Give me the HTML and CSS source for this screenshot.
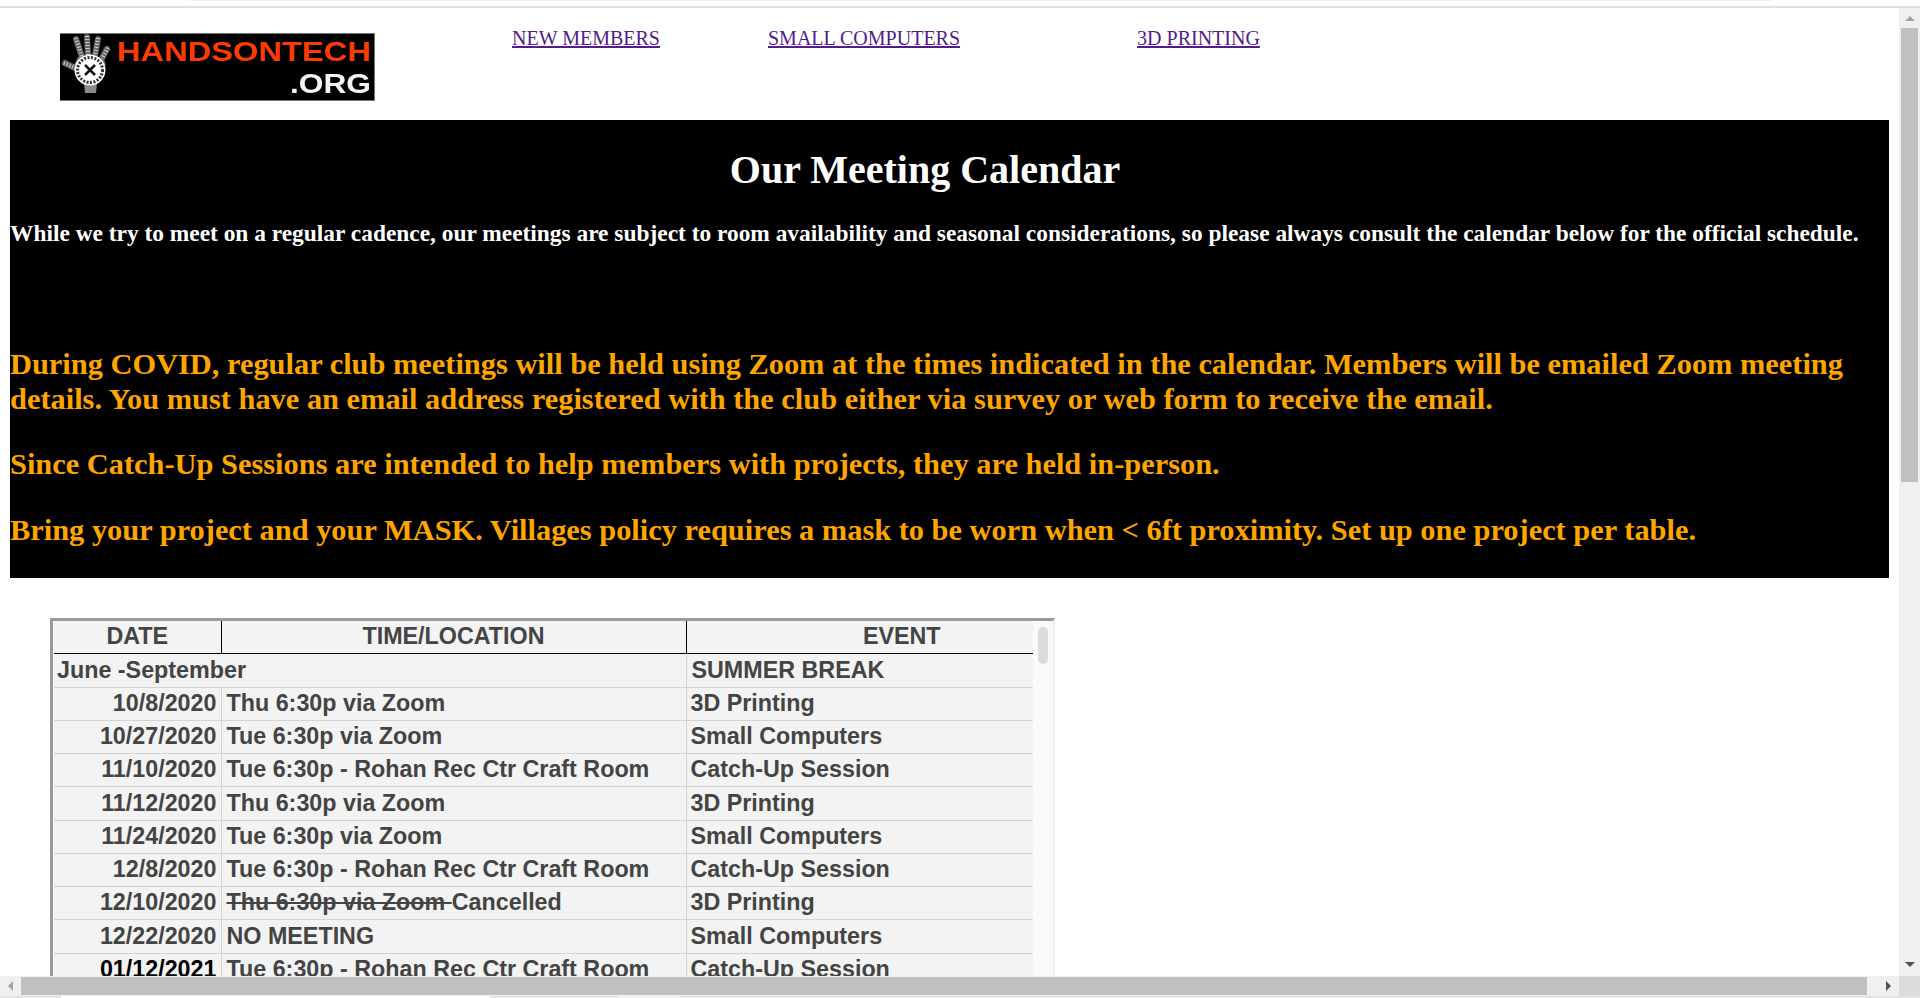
FILE: index.html
```html
<!DOCTYPE html>
<html lang="en">
<head>
<meta charset="utf-8">
<title>Our Meeting Calendar</title>
<link rel="stylesheet" href="styles.css">
</head>
<body>
<div class="shell">
  <div class="topstrip"><span class="topstrip-bar"></span></div>
  <div class="viewport">
    <main class="page">
      <header class="masthead">
        <a class="logo" href="#" aria-label="HandsOnTech.org">
          <svg width="315" height="68" viewBox="0 0 315 68">
            <rect x="0" y="0" width="315" height="68" fill="#777"/>
            <rect x="0" y="1" width="314" height="66" fill="#000"/>
            <g fill="none" stroke="#666" stroke-width="6" stroke-linecap="round">
              <path d="M16 6 22 24"/><path d="M27 4 28 22"/><path d="M38 6 35 22"/><path d="M47 16 41 27"/><path d="M5 30 17 36"/>
            </g>
            <g fill="none" stroke="#d0d0d0" stroke-width="4" stroke-dasharray="1 2">
              <path d="M16 5 22 24"/><path d="M27 3 28 22"/><path d="M38 5 35 22"/><path d="M48 15 41 27"/><path d="M4 30 17 36"/>
            </g>
            <path d="M18 24H43L46 32H14Z" fill="#777"/>
            <path d="M24 50H37L36 60H25Z" fill="#8a8a8a"/>
            <circle cx="30" cy="37" r="15.500" fill="#fff"/>
            <circle cx="30" cy="37" r="12.500" fill="none" stroke="#333" stroke-width="3" stroke-dasharray="2 1.500"/>
            <path d="M25 32 35 42M35 32 25 42" stroke="#111" stroke-width="2.500"/>
            <text class="logo-red" x="57" y="28" textLength="254" lengthAdjust="spacingAndGlyphs">HANDSONTECH</text>
            <text class="logo-white" x="230" y="60" textLength="81" lengthAdjust="spacingAndGlyphs">.ORG</text>
          </svg>
        </a>
        <nav class="nav">
          <a class="nav-a" href="#">NEW MEMBERS</a>
          <a class="nav-b" href="#">SMALL COMPUTERS</a>
          <a class="nav-c" href="#">3D PRINTING</a>
        </nav>
      </header>
      <section class="hero">
        <h1>Our Meeting Calendar</h1>
        <p class="lead">While we try to meet on a regular cadence, our meetings are subject to room availability and seasonal considerations, so please always consult the calendar below for the official schedule.</p>
        <p class="note first">During COVID, regular club meetings will be held using Zoom at the times indicated in the calendar. Members will be emailed Zoom meeting details. You must have an email address registered with the club either via survey or web form to receive the email.</p>
        <p class="note">Since Catch-Up Sessions are intended to help members with projects, they are held in-person.</p>
        <p class="note last">Bring your project and your MASK. Villages policy requires a mask to be worn when &lt; 6ft proximity. Set up one project per table.</p>
      </section>
      <div class="frame">
        <div class="sheet">
          <table class="cal">
            <thead><tr><th class="c1">DATE</th><th class="c2">TIME/LOCATION</th><th class="c3">EVENT</th></tr></thead>
            <tbody>
              <tr><td class="span" colspan="2">June -September</td><td>SUMMER BREAK</td></tr>
              <tr><td class="num">10/8/2020</td><td>Thu 6:30p via Zoom</td><td>3D Printing</td></tr>
              <tr><td class="num">10/27/2020</td><td>Tue 6:30p via Zoom</td><td>Small Computers</td></tr>
              <tr><td class="num">11/10/2020</td><td>Tue 6:30p - Rohan Rec Ctr Craft Room</td><td>Catch-Up Session</td></tr>
              <tr><td class="num">11/12/2020</td><td>Thu 6:30p via Zoom</td><td>3D Printing</td></tr>
              <tr><td class="num">11/24/2020</td><td>Tue 6:30p via Zoom</td><td>Small Computers</td></tr>
              <tr><td class="num">12/8/2020</td><td>Tue 6:30p - Rohan Rec Ctr Craft Room</td><td>Catch-Up Session</td></tr>
              <tr><td class="num">12/10/2020</td><td><s>Thu 6:30p via Zoom </s>Cancelled</td><td>3D Printing</td></tr>
              <tr><td class="num">12/22/2020</td><td>NO MEETING</td><td>Small Computers</td></tr>
              <tr><td class="num dark">01/12/2021</td><td>Tue 6:30p - Rohan Rec Ctr Craft Room</td><td>Catch-Up Session</td></tr>
            </tbody>
          </table>
          <div class="mini-track"><span class="mini-thumb"></span></div>
        </div>
      </div>
    </main>
    <div class="vbar">
      <span class="arrow up"></span>
      <span class="vthumb"></span>
      <span class="arrow down"></span>
    </div>
  </div>
  <div class="hbar">
    <span class="arrow left-a"></span>
    <span class="hthumb"></span>
    <span class="arrow right-a"></span>
    <span class="corner"></span>
  </div>
  <div class="bottomstrip"><span class="tab-a"></span><span class="tab-b"></span></div>
</div>
</body>
</html>
```
FILE: styles.css
```css
* { box-sizing: border-box; }
html, body { margin: 0; height: 100%; overflow: hidden; background: #fff; }
.shell { height: 998px; display: flex; flex-direction: column; font-family: "Liberation Serif", serif; }
.topstrip { height: 8px; flex: none; border-bottom: 2px solid #e0e0e0; }
.topstrip-bar { display: block; height: 1px; margin: 0 147px 0 190px; background: #f0f0f0; }
.viewport { flex: 1; min-height: 0; display: flex; }
.page { flex: 1; min-width: 0; overflow: hidden; padding: 0 10px; }
.masthead { height: 112px; display: flex; }
.logo { display: block; flex: none; margin: 25px 0 0 50px; width: 315px; height: 68px; }
.logo svg { display: block; filter: blur(0.3px); }
.logo-red { font: 700 27px "Liberation Sans", sans-serif; fill: #ff3a00; }
.logo-white { font: 700 27px "Liberation Sans", sans-serif; fill: #f4f4f4; }
.nav { display: flex; padding-top: 18px; font-size: 20px; line-height: 24px; margin-left: 137px; }
.nav a { color: #551a8b; }
.nav-b { margin-left: 108px; }
.nav-c { margin-left: 177px; }
.hero { width: 1879px; height: 458px; background: #000; color: #fff; overflow: hidden; }
.hero h1 { margin: 27px 0 0; padding-right: 49px; font-size: 40px; line-height: 46px; text-align: center; }
.lead { margin: 27px 0 0; font-size: 23.400px; line-height: 27px; font-weight: 700; white-space: nowrap; }
.note { margin: 30px 0 0; font-size: 30.400px; line-height: 35px; font-weight: 700; color: #ffa500; }
.note.first { margin-top: 100px; }
.note.last { margin-top: 31px; }
.frame { margin: 40px 0 0 40px; width: 1005px; height: 400px; border: 2px solid #eee; border-top: 3px solid #9a9a9a; border-left: 3px solid #9a9a9a; padding: 0 0 0 1px; background: #fff; }
.sheet { display: flex; height: 100%; }
.cal { border-collapse: collapse; table-layout: fixed; flex: none; width: 979px; height: 0; font: 700 23.300px "Liberation Sans", sans-serif; color: #444; background: #f3f3f3; }
.cal th, .cal td { padding: 0 4px; height: 33px; white-space: nowrap; border-bottom: 1px solid #d4d4d4; border-right: 1px solid #d4d4d4; overflow: hidden; }
.cal tbody tr:nth-child(4n+1) td { height: 34px; }
.cal td:nth-child(2) { padding-left: 5px; }
.cal td:last-child, .cal th:last-child { border-right: 0; }
.cal th { height: 32px; text-align: center; border-bottom-color: #000; border-right-color: #000; }
.cal th.c3 { padding-left: 88px; }
.c1 { width: 167px; }
.c2 { width: 465px; }
.cal td.span { padding-left: 3px; }
.num { text-align: right; }
.dark { color: #000; }
.mini-track { flex: 1; background: #fafafa; padding: 6px 5px 0; }
.mini-thumb { display: block; width: 10px; height: 37px; border-radius: 5px; background: #dadce0; }
.vbar { width: 21px; flex: none; background: #f0f0f0; display: flex; flex-direction: column; align-items: center; }
.vthumb { display: block; width: 17px; height: 454px; background: #c0c0c0; flex: none; }
.vbar .up { margin: 8px 0 7px; }
.vbar .down { margin-top: auto; margin-bottom: 9px; }
.arrow { display: block; width: 0; height: 0; flex: none; border-style: solid; border-color: transparent; }
.up { border-width: 0 5px 5px; border-bottom-color: #a3a3a3; }
.down { border-width: 5px 5px 0; border-top-color: #505050; }
.left-a { border-width: 5px 5px 5px 0; border-right-color: #a3a3a3; margin: 0 8px; }
.right-a { border-width: 5px 0 5px 5px; border-left-color: #505050; margin: 0 8px 0 19px; }
.hbar { height: 20px; flex: none; display: flex; align-items: center; background: #f0f0f0; }
.hthumb { display: block; flex: none; width: 1846px; height: 18px; background: #c0c0c0; }
.corner { flex: none; width: 21px; height: 20px; background: #dcdcdc; }
.bottomstrip { height: 2px; flex: none; background: #e4e4e4; display: flex; padding-left: 61px; }
.tab-a { display: block; width: 429px; background: #fff; }
.tab-b { display: block; width: 62px; margin-left: 128px; background: #f2f2f2; }
```
